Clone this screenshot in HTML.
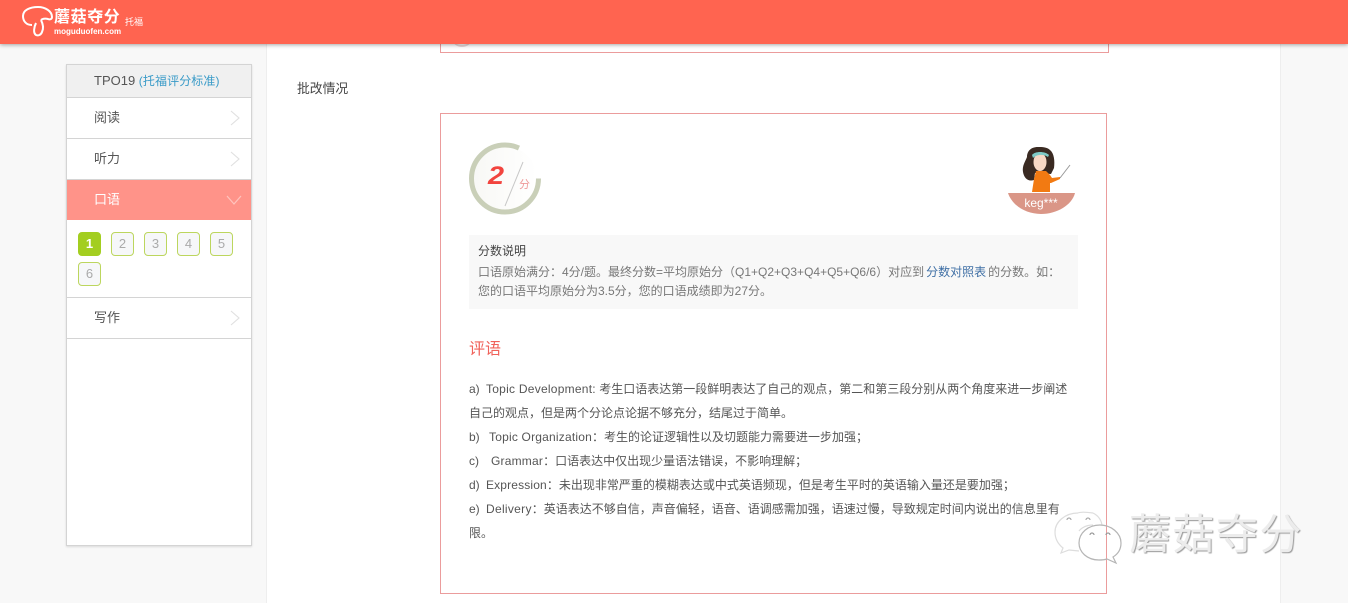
<!DOCTYPE html>
<html><head><meta charset="utf-8"><style>
html,body{margin:0;padding:0}
body{width:1348px;height:603px;overflow:hidden;position:relative;background:#f8f8f8;font-family:"Liberation Sans","Noto Sans CJK SC",sans-serif;color:#555}
.a{position:absolute;white-space:nowrap}
.t{font-size:12px;line-height:24px;color:#555;left:469px}
.t i{font-style:normal;display:inline-block}
.t b{font-weight:normal;letter-spacing:.2px}
.m{left:67px;width:184px;height:40px;border-bottom:1px solid #d4d4d4;background:#fff;font-size:13px;line-height:39px;text-indent:27px;color:#555}
.n{width:21px;height:22px;border:1px solid #bcd65e;border-radius:4px;background:#f6f7f9;font-size:13px;line-height:22px;text-align:center;color:#aaa}
</style></head><body>
<div class="a" style="left:266px;top:0;width:1015px;height:603px;background:#fff;border-left:1px solid #eee;border-right:1px solid #eee;box-sizing:border-box"></div>

<div class="a" style="left:440px;top:20px;width:667px;height:31px;border:1px solid #eb9c9c"></div>
<div class="a" style="left:452px;top:30px;width:20px;height:15px;border-bottom:2px solid #e8d8d8;border-radius:50%"></div>

<div class="a" style="left:0;top:0;width:1348px;height:44px;background:#ff6450;box-shadow:0 1px 4px rgba(0,0,0,.35)"></div>
<svg class="a" style="left:21px;top:5px" width="36" height="34" viewBox="0 0 36 34" fill="none" stroke="#fff" stroke-width="2"><path d="M11 20C5 20 2 16 2 11 2 5 9 2 17 2c7 0 14 4 14 10 0 2-2 3-4 2-3-1-6 0-7 1"/><path d="M20 15c2 4 3 8 1 12-1 3-4 4-6 3-3-2-2-8 0-12"/></svg>
<div class="a" style="left:54px;top:7px;font-size:16px;line-height:22px;font-weight:bold;color:#fff;letter-spacing:.6px">蘑菇夺分</div>
<div class="a" style="left:54px;top:27px;font-size:8px;line-height:10px;font-weight:bold;color:#fff">moguduofen.com</div>
<div class="a" style="left:125px;top:16px;font-size:9px;line-height:12px;color:#fff">托福</div>

<div class="a" style="left:66px;top:64px;width:184px;height:480px;border:1px solid #d4d4d4;background:#fff;box-shadow:0 1px 2px rgba(0,0,0,.12)"></div>
<div class="a" style="left:67px;top:65px;width:184px;height:32px;background:#f0f0f0;border-bottom:1px solid #d4d4d4;font-size:13px;line-height:32px;text-indent:27px;color:#555">TPO19 <span style="color:#3a9bc8;font-size:12px;letter-spacing:.1px">(托福评分标准)</span></div>
<div class="a m" style="top:98px">阅读</div>
<div class="a m" style="top:139px">听力</div>
<div class="a m" style="top:180px;background:#ff9389;color:#fff;border:0">口语</div>
<div class="a" style="left:67px;top:220px;width:184px;height:77px;background:#fff;border-bottom:1px solid #d4d4d4"></div>
<div class="a m" style="top:298px">写作</div>
<svg class="a" style="left:225px;top:105px" width="20" height="225" fill="none" stroke="#e0e0e0" stroke-width="1.1"><path d="M6 6l8 7-8 7M6 47l8 7-8 7M6 206l8 7-8 7"/><path d="M2 91l7 8 7-8" stroke="#ffc4be" stroke-width="1.2"/></svg>
<div class="a n" style="left:78px;top:232px;background:#a3ce20;border-color:#a3ce20;color:#fff;font-weight:bold">1</div>
<div class="a n" style="left:111px;top:232px">2</div>
<div class="a n" style="left:144px;top:232px">3</div>
<div class="a n" style="left:177px;top:232px">4</div>
<div class="a n" style="left:210px;top:232px">5</div>
<div class="a n" style="left:78px;top:262px">6</div>

<div class="a" style="left:297px;top:80px;font-size:12.8px;line-height:18px;color:#444">批改情况</div>

<div class="a" style="left:440px;top:113px;width:665px;height:479px;border:1px solid #eb9c9c"></div>

<svg class="a" style="left:465px;top:139px" width="84" height="80" viewBox="0 0 84 80">
<defs><linearGradient id="g" x1="0" x2="1" y1="0" y2="0"><stop offset="0" stop-color="#f8f8f5"/><stop offset="1" stop-color="#fff"/></linearGradient></defs>
<circle cx="40" cy="39.5" r="32" fill="url(#g)"/>
<circle cx="40" cy="39.5" r="33.5" fill="none" stroke="#c9cfb8" stroke-width="5" stroke-dasharray="172 60"/>
<line x1="58" y1="23" x2="40" y2="67" stroke="#c8c8c8" stroke-width="1"/>
<text transform="translate(23 45) scale(1.2 1.05)" font-family="Liberation Sans" font-size="24" font-weight="bold" font-style="italic" fill="#f2443e">2</text>
<text x="54" y="49" font-family="Noto Sans CJK SC" font-size="11" fill="#ee9a9a">分</text>
</svg>

<svg class="a" style="left:1005px;top:143px" width="74" height="74" viewBox="0 0 74 74">
<path d="M3 50H70C67 62 52 71 36 71 20 71 7 62 3 50Z" fill="#da9687"/>
<line x1="55" y1="35" x2="65" y2="22" stroke="#999" stroke-width="1"/>
<path d="M33 4C25 4 22 9 22 14 20 19 17 23 18 29 19 35 23 39 29 37L30 30 46 31 49 25C50 18 49 10 45 7 42 4 37 4 33 4Z" fill="#3a2a22"/>
<path d="M31 28h10l4 4 2 3 8-1 0 2-9 4-1 0 0 9H27l2-13z" fill="#f27a12"/>
<ellipse cx="35" cy="19" rx="6.5" ry="9" fill="#f7d8c4"/>
<path d="M27 12c3-4 13-4 17 0l-1 2c-4-3-11-3-15 1z" fill="#7ecbc6"/>
<text x="36" y="64" text-anchor="middle" font-family="Liberation Sans" font-size="12" fill="#fff">keg***</text>
</svg>

<div class="a" style="left:469px;top:235px;width:609px;height:74px;background:#f8f8f8"></div>
<div class="a" style="left:478px;top:242px;font-size:12px;line-height:19px;color:#444">分数说明</div>
<div class="a" style="left:478px;top:262px;font-size:12px;line-height:20px;color:#777">口语原始满分：4分/题。最终分数=平均原始分（Q1+Q2+Q3+Q4+Q5+Q6/6）对应到<span style="color:#3f6fa5;margin:0 2px 0 2px">分数对照表</span>的分数。如：</div>
<div class="a" style="left:478px;top:281px;font-size:12px;line-height:20px;color:#777">您的口语平均原始分为3.5分，您的口语成绩即为27分。</div>

<div class="a" style="left:469px;top:340px;font-size:16px;line-height:20px;color:#f0625a">评语</div>

<div class="a t" style="top:377px"><i style="width:17px">a)</i><b style="letter-spacing:.25px">Topic Development:</b> 考生口语表达第一段鲜明表达了自己的观点，第二和第三段分别从两个角度来进一步阐述</div>
<div class="a t" style="top:401px">自己的观点，但是两个分论点论据不够充分，结尾过于简单。</div>
<div class="a t" style="top:425px"><i style="width:20px">b)</i><b style="letter-spacing:.2px">Topic Organization</b>：考生的论证逻辑性以及切题能力需要进一步加强；</div>
<div class="a t" style="top:449px"><i style="width:22px">c)</i><b>Grammar</b>：口语表达中仅出现少量语法错误，不影响理解；</div>
<div class="a t" style="top:473px"><i style="width:17px">d)</i><b style="letter-spacing:.15px">Expression</b>：未出现非常严重的模糊表达或中式英语频现，但是考生平时的英语输入量还是要加强；</div>
<div class="a t" style="top:497px"><i style="width:17px">e)</i><b style="letter-spacing:.3px">Delivery</b>：英语表达不够自信，声音偏轻，语音、语调感需加强，语速过慢，导致规定时间内说出的信息里有</div>
<div class="a t" style="top:521px">限。</div>

<svg class="a" style="left:1050px;top:508px" width="78" height="60" fill="none" stroke="#bbb" stroke-width="1.2">
<path d="M28 5C15 5 5 14 5 24c0 7 3 12 8 16l-2 5 8-3 10 1" stroke="#ddd"/>
<path d="M43 17C33 17 29 23 29 23M43 5C36 4 30 4 28 5M43 5C47 7 51 11 52 17" stroke="#ddd"/>
<path d="M50 17C61 17 71 25 71 35c0 6-3 11-8 14l3 6-9-4c-3 1-5 1-8 1-12 0-20-8-20-17 0-10 9-18 21-18z" stroke="#b5b5b5"/>
<path d="M17 12a2 2 0 0 1 4 0M36 12a2 2 0 0 1 4 0" stroke="#aaa"/>
<path d="M40 27a2 2 0 0 1 4 0M56 27a2 2 0 0 1 4 0" stroke="#999"/>
</svg>
<div class="a" style="left:1129px;top:508px;font-size:42px;line-height:54px;color:#ececec;letter-spacing:1.5px;text-shadow:1px 1px 1px #999">蘑菇夺分</div>
</body></html>
